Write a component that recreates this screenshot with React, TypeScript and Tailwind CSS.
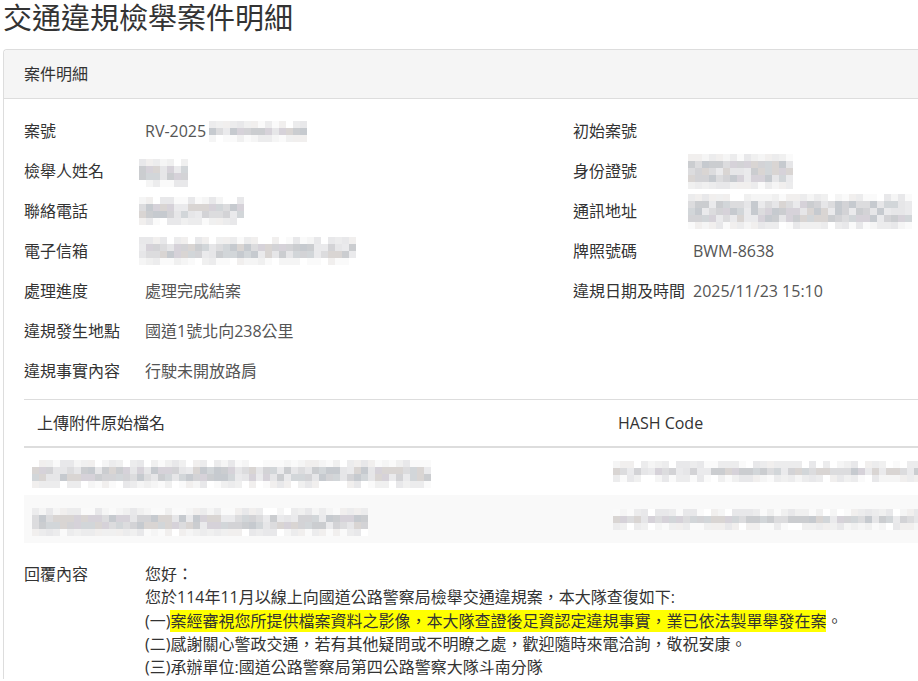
import React from 'react';

// light/dark cells for the pixelated (redacted) areas
const LIGHT = ['bg-[#f5f5f5]', 'bg-[#f0f0f0]', 'bg-[#ececed]', 'bg-[#fafafa]', 'bg-[#e8e8ea]', 'bg-white', 'bg-[#f1efee]'];
const DARK = ['bg-[#dcdcde]', 'bg-[#d3d3d6]', 'bg-[#cbcdd0]', 'bg-[#d9d5d3]', 'bg-[#d2d6d9]', 'bg-[#e6e6e8]', 'bg-[#c6cacf]', 'bg-[#d6d2d9]', 'bg-[#eaeaec]'];

function seeded(seed: number) {
  let s = seed;
  return () => {
    s = (s * 9301 + 49297) % 233280;
    return s / 233280;
  };
}

const Mosaic: React.FC<{ w: number; rows: number; seed: number; className?: string }> = ({ w, rows, seed, className = '' }) => {
  const cols = Math.ceil(w / 7);
  const r = seeded(seed);
  return (
    <div className={`flex flex-col ${className}`}>
      {Array.from({ length: rows }).map((_, i) => {
        const dark = rows <= 2 || (i > 0 && i < rows - 1);
        const pal = dark ? DARK : LIGHT;
        return (
          <div key={i} className="flex">
            {Array.from({ length: cols }).map((_, j) => (
              <div key={j} className={`w-[7px] h-[7px] ${pal[Math.floor(r() * pal.length)]}`} />
            ))}
          </div>
        );
      })}
    </div>
  );
};

const Field: React.FC<{ label: string; labelW: string; children?: React.ReactNode }> = ({ label, labelW, children }) => (
  <div className="flex items-center h-[40px]">
    <div className={`${labelW} shrink-0 text-[#333]`}>{label}</div>
    <div className="flex items-center text-[#555]">{children}</div>
  </div>
);

export default function App() {
  return (
    <div className="w-full h-[681px] overflow-hidden bg-white font-['Open_Sans','Noto_Sans_CJK_TC',sans-serif] text-[16px] text-[#333]">
      <div className="w-[1146px] pl-[3px]">
        <h1 className="text-[29px] leading-[36px] font-normal text-[#333]">交通違規檢舉案件明細</h1>

        <div className="mt-[13px] border-l border-t border-[#ddd] rounded-tl-[4px]">
          {/* panel heading */}
          <div className="h-[49px] flex items-center px-[20px] bg-[#f5f5f5] border-b border-[#ddd] rounded-tl-[4px] text-[#333]">
            案件明細
          </div>

          <div className="px-[20px] pt-[12px]">
            <div className="grid grid-cols-[549px_1fr]">
              <Field label="案號" labelW="w-[121px]">
                RV-2025
                <Mosaic w={94} rows={3} seed={3} className="ml-[3px]" />
              </Field>
              <Field label="初始案號" labelW="w-[120px]" />

              <Field label="檢舉人姓名" labelW="w-[121px]">
                <Mosaic w={48} rows={4} seed={11} className="-ml-[6px] mt-[4px]" />
              </Field>
              <Field label="身份證號" labelW="w-[120px]">
                <Mosaic w={105} rows={5} seed={17} className="-ml-[5px]" />
              </Field>

              <Field label="聯絡電話" labelW="w-[121px]">
                <Mosaic w={104} rows={4} seed={23} className="-ml-[6px]" />
              </Field>
              <Field label="通訊地址" labelW="w-[120px]">
                <Mosaic w={224} rows={5} seed={29} className="-ml-[5px]" />
              </Field>

              <Field label="電子信箱" labelW="w-[121px]">
                <Mosaic w={216} rows={4} seed={37} className="-ml-[6px]" />
              </Field>
              <Field label="牌照號碼" labelW="w-[120px]">BWM-8638</Field>

              <Field label="處理進度" labelW="w-[121px]">處理完成結案</Field>
              <Field label="違規日期及時間" labelW="w-[120px]">2025/11/23 15:10</Field>

              <Field label="違規發生地點" labelW="w-[121px]">國道1號北向238公里</Field>
              <div />

              <Field label="違規事實內容" labelW="w-[121px]">行駛未開放路肩</Field>
              <div />
            </div>

            {/* attachments */}
            <div className="mt-[8px] border-t border-[#ddd]">
              <div className="flex items-center h-[48px] border-b-2 border-[#ddd] text-[#333]">
                <div className="w-[581px] pl-[13px]">上傳附件原始檔名</div>
                <div className="pl-[13px]">HASH Code</div>
              </div>
              <div className="flex items-center h-[47px]">
                <div className="w-[581px] pl-[8px]">
                  <Mosaic w={393} rows={4} seed={41} className="mt-[5px]" />
                </div>
                <div className="pl-[8px]">
                  <Mosaic w={320} rows={3} seed={47} />
                </div>
              </div>
              <div className="flex items-center h-[48px] bg-[#f9f9f9]">
                <div className="w-[581px] pl-[8px]">
                  <Mosaic w={330} rows={4} seed={53} className="mt-[6px]" />
                </div>
                <div className="pl-[8px]">
                  <Mosaic w={320} rows={3} seed={59} />
                </div>
              </div>
            </div>

            {/* reply */}
            <div className="mt-[20px] flex leading-[23.3px]">
              <div className="w-[121px] shrink-0 text-[#333]">回覆內容</div>
              <div className="text-[#333]">
                <div>您好：</div>
                <div>您於114年11月以線上向國道公路警察局檢舉交通違規案，本大隊查復如下:</div>
                <div>
                  (一)<span className="bg-[#ffff00]">案經審視您所提供檔案資料之影像，本大隊查證後足資認定違規事實，業已依法製單舉發在案</span>。
                </div>
                <div>(二)感謝關心警政交通，若有其他疑問或不明瞭之處，歡迎隨時來電洽詢，敬祝安康。</div>
                <div>(三)承辦單位:國道公路警察局第四公路警察大隊斗南分隊</div>
              </div>
            </div>
          </div>
        </div>
      </div>
    </div>
  );
}
